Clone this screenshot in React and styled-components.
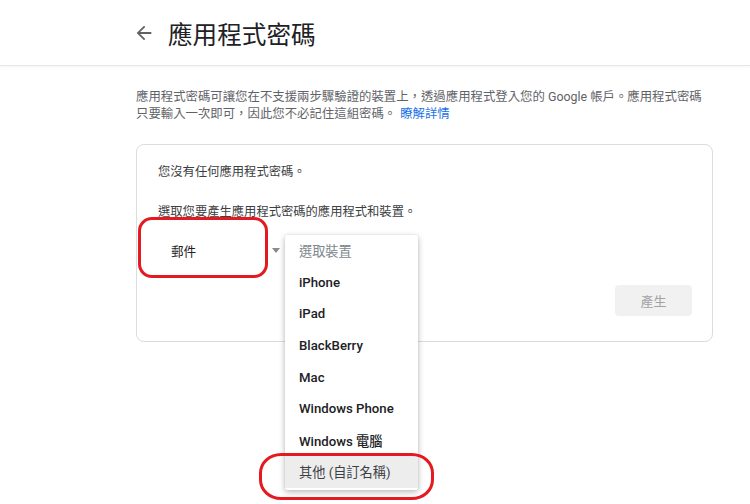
import React from "react";
import styled, { createGlobalStyle } from "styled-components";

const Global = createGlobalStyle`
  html, body { margin: 0; padding: 0; background: #fff; }
  body { font-family: Roboto, "Noto Sans CJK TC", "Noto Sans", sans-serif; }
  * { box-sizing: border-box; }
`;

const Page = styled.div`
  position: relative;
  width: 750px;
  height: 504px;
  overflow: hidden;
  background: #fff;
`;

const Header = styled.header`
  height: 66px;
  display: flex;
  align-items: center;
  padding-left: 133px;
  gap: 13px;
  border-bottom: 1px solid #e6e6e6;
  box-shadow: 0 1px 2px rgba(0, 0, 0, 0.04);
`;

const BackIcon = styled.svg`
  width: 22px;
  height: 22px;
  fill: #5f6368;
  flex: none;
`;

const Title = styled.h1`
  margin: 0;
  font-family: "Noto Sans CJK TC", sans-serif;
  font-size: 24.6px;
  font-weight: 400;
  color: #202124;
  line-height: 32px;
`;

const Main = styled.main`
  margin-left: 136px;
  width: 577px;
`;

const Desc = styled.p`
  margin: 22px 0 0;
  width: 572px;
  font-size: 12.4px;
  line-height: 17px;
  color: #5f6368;
`;

const Link = styled.a`
  color: #1a73e8;
  text-decoration: none;
  margin-left: 4px;
  display: inline-block;
`;

const Card = styled.section`
  margin-top: 22px;
  border: 1px solid #dadce0;
  border-radius: 8px;
  padding: 19px 20px 25px 21px;
`;

const Text = styled.p`
  margin: ${(p) => p.$mt || 0}px 0 0;
  font-size: 12.3px;
  line-height: 17px;
  color: #3c4043;
`;

const SelectRow = styled.div`
  position: relative;
  margin-top: 13px;
  height: 32px;
  display: flex;
  align-items: center;
`;

const SelectValue = styled.span`
  margin-left: 13px;
  width: 101px;
  font-size: 12.6px;
  color: #202124;
`;

const Caret = styled.span`
  width: 0;
  height: 0;
  border-left: 4.5px solid transparent;
  border-right: 4.5px solid transparent;
  border-top: 5px solid #8a8a8a;
`;

const Menu = styled.ul`
  position: absolute;
  left: 127px;
  top: 1px;
  width: 133px;
  margin: 0;
  padding: 0 0 2px;
  list-style: none;
  background: #fff;
  box-shadow: 0 2px 6px rgba(0, 0, 0, 0.28), 0 0 2px rgba(0, 0, 0, 0.08);
  border-radius: 2px;
  z-index: 2;
`;

const Item = styled.li`
  height: 31.6px;
  display: flex;
  align-items: center;
  padding-left: 14px;
  font-size: 13.2px;
  white-space: nowrap;
  font-weight: ${(p) => (p.$placeholder || p.$active ? 400 : 500)};
  color: ${(p) => (p.$placeholder ? "#80868b" : p.$active ? "#3c4043" : "#202124")};
  background: ${(p) => (p.$active ? "#ededed" : "transparent")};
`;

const ButtonRow = styled.div`
  margin-top: 19px;
  display: flex;
  justify-content: flex-end;
`;

const Button = styled.button`
  width: 77px;
  height: 31px;
  border: none;
  border-radius: 4px;
  background: #f1f1f1;
  color: #a3a3a3;
  font-family: "Noto Sans CJK TC", sans-serif;
  font-size: 13px;
  cursor: default;
`;

const Annotation = styled.div`
  position: absolute;
  border: 3px solid #e51920;
  pointer-events: none;
  z-index: 5;
  left: ${(p) => p.$x}px;
  top: ${(p) => p.$y}px;
  width: ${(p) => p.$w}px;
  height: ${(p) => p.$h}px;
  border-radius: ${(p) => p.$r};
`;

const devices = [
  "iPhone",
  "iPad",
  "BlackBerry",
  "Mac",
  "Windows Phone",
  "Windows 電腦",
];

export default function App() {
  return (
    <Page>
      <Global />
      <Header>
        <BackIcon viewBox="0 0 24 24">
          <path d="M20 11H7.83l5.59-5.59L12 4l-8 8 8 8 1.41-1.41L7.83 13H20v-2z" />
        </BackIcon>
        <Title>應用程式密碼</Title>
      </Header>
      <Main>
        <Desc>
          應用程式密碼可讓您在不支援兩步驟驗證的裝置上，透過應用程式登入您的 Google 帳戶。應用程式密碼只要輸入一次即可，因此您不必記住這組密碼。
          <Link href="#">瞭解詳情</Link>
        </Desc>
        <Card>
          <Text>您沒有任何應用程式密碼。</Text>
          <Text $mt={23}>選取您要產生應用程式密碼的應用程式和裝置。</Text>
          <SelectRow>
            <SelectValue>郵件</SelectValue>
            <Caret />
            <Menu>
              <Item $placeholder>選取裝置</Item>
              {devices.map((d) => (
                <Item key={d}>{d}</Item>
              ))}
              <Item $active>其他 (自訂名稱)</Item>
            </Menu>
          </SelectRow>
          <ButtonRow>
            <Button>產生</Button>
          </ButtonRow>
        </Card>
      </Main>
      <Annotation $x={138} $y={217} $w={130} $h={61} $r="14px" />
      <Annotation $x={259} $y={453} $w={175} $h={47} $r="22px / 20px" />
    </Page>
  );
}
